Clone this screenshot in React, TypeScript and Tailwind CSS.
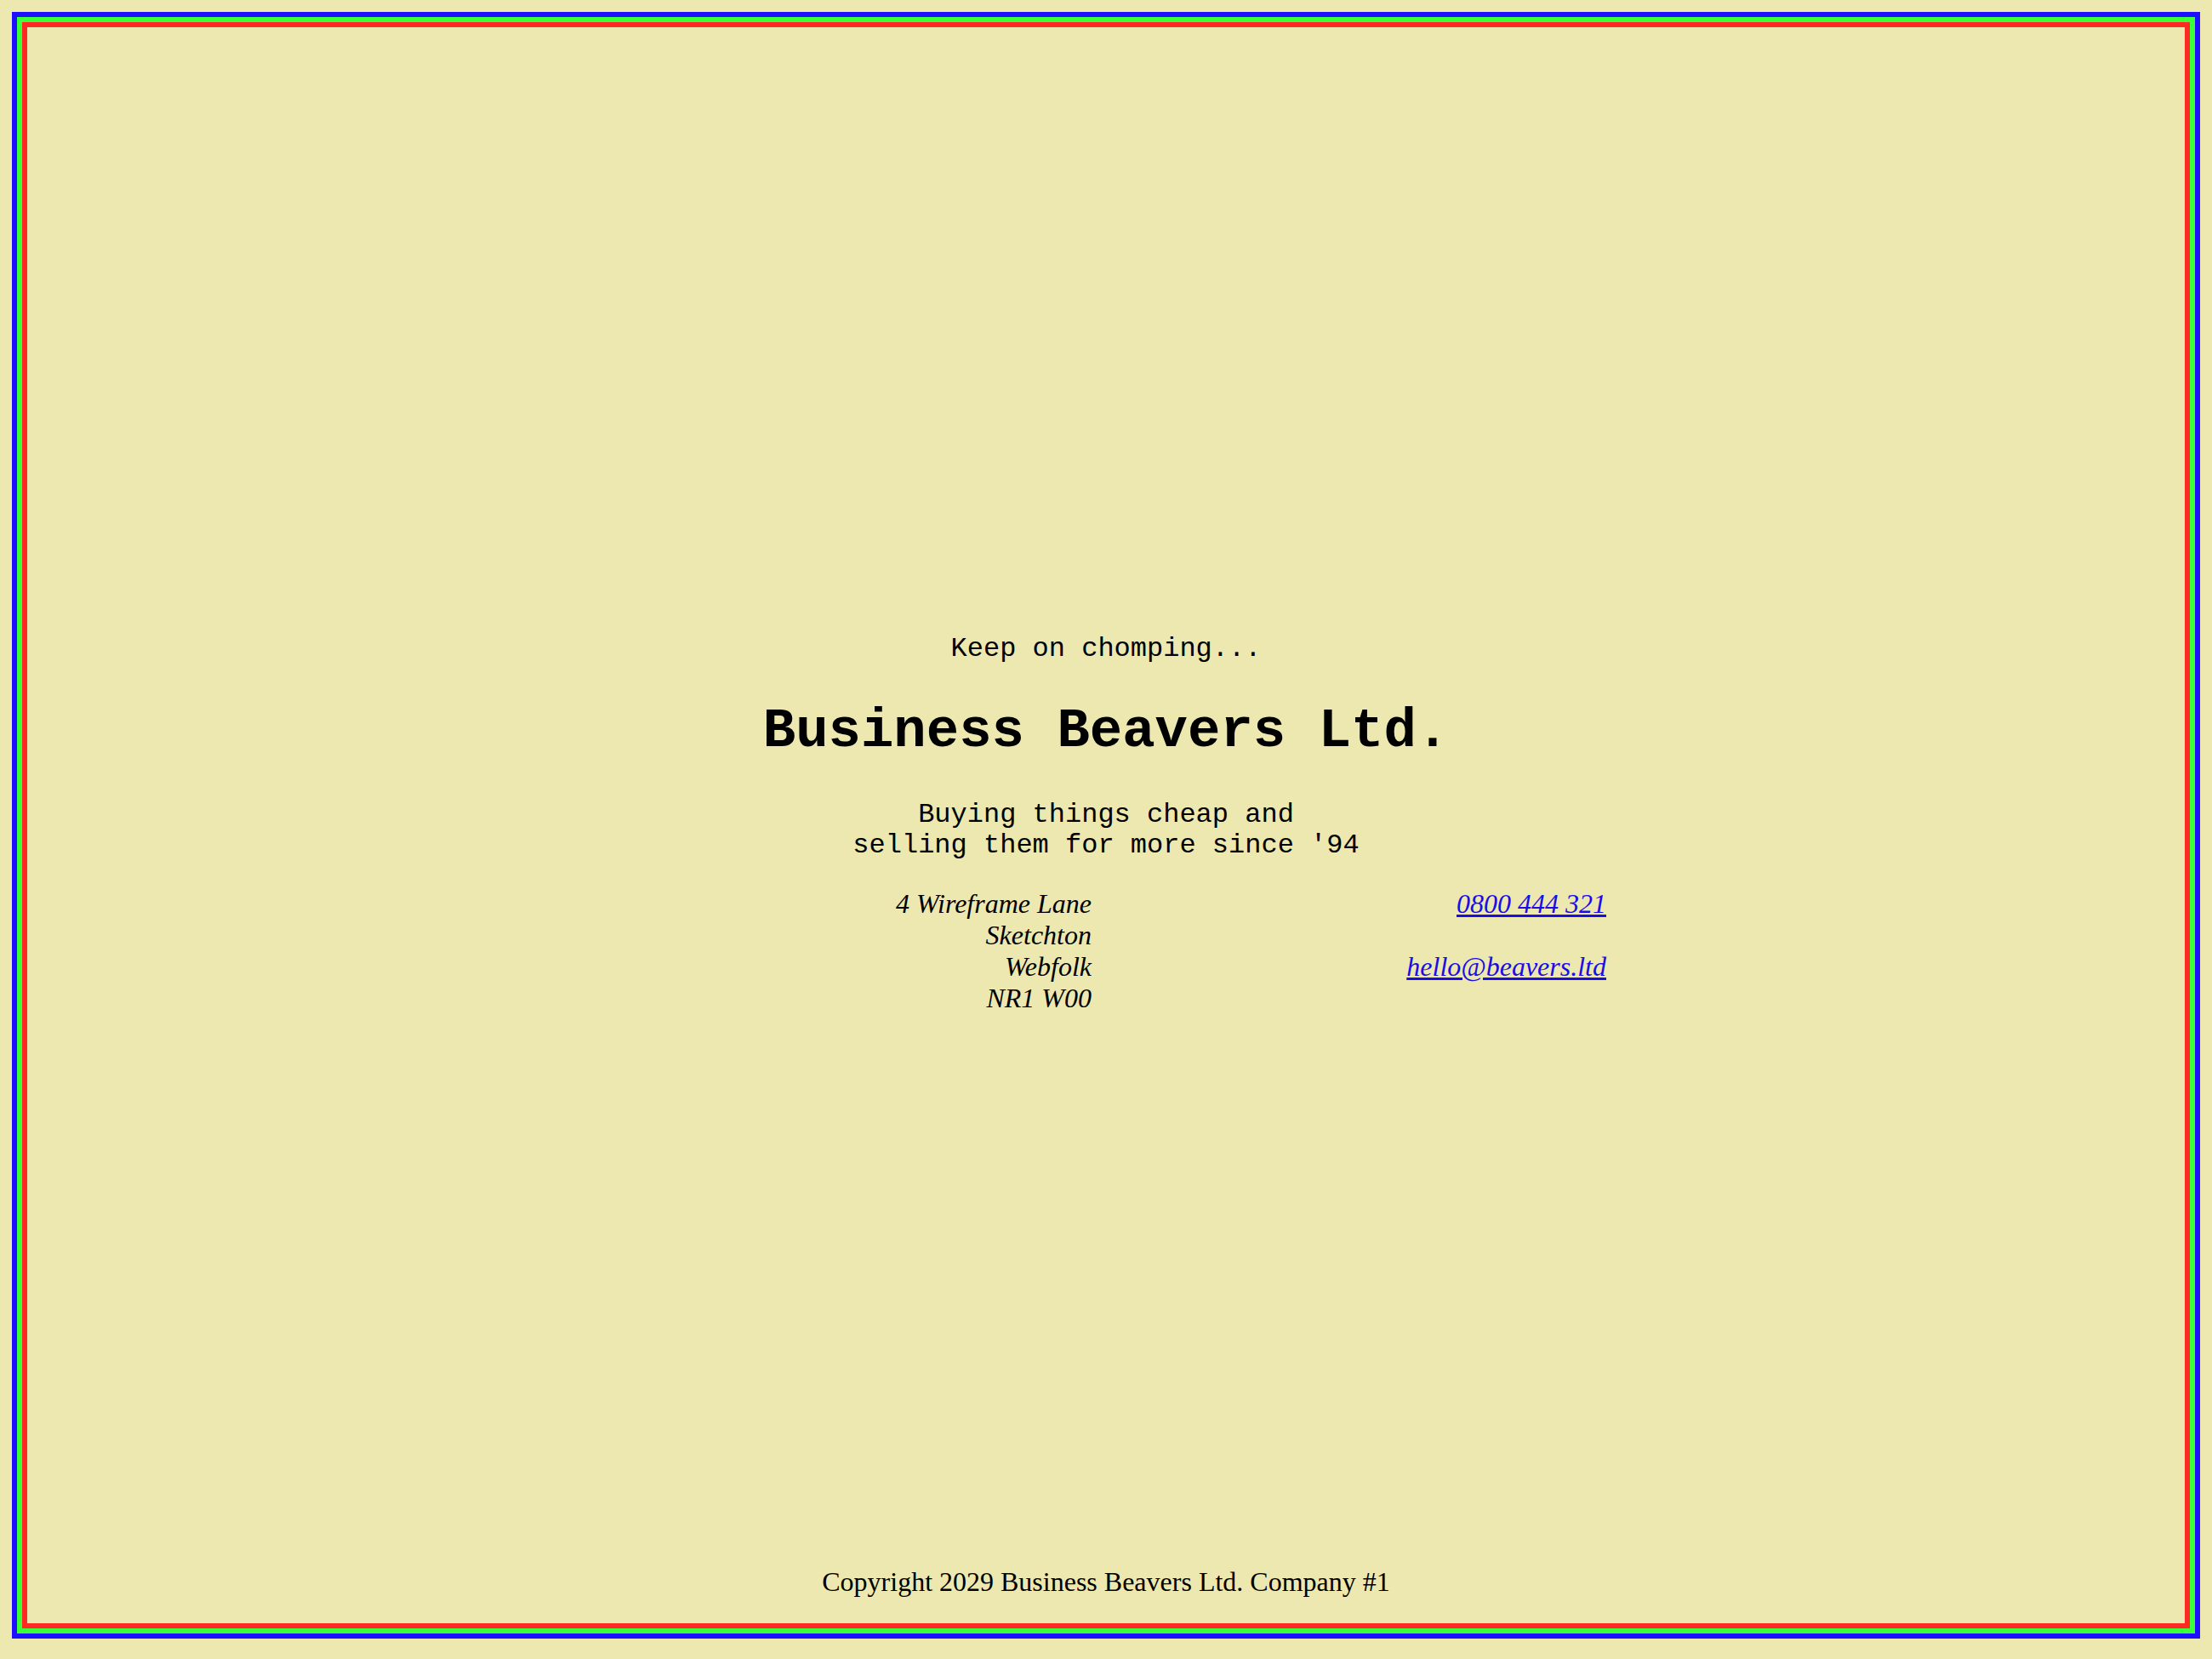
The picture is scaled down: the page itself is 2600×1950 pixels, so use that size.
export default function App() {
  return (
    <div className="h-[1950px] w-full bg-[#ede8b0] px-[14px] pt-[14px] pb-[24px] text-black">
      <div className="h-full border-[6px] border-[#1c10ff]">
        <div className="h-full border-[6px] border-[#3cff3c]">
          <div className="flex h-full flex-col border-[6px] border-[#ff2a24]">
            {/* main */}
            <main className="flex flex-1 flex-col items-center justify-center pt-[64px] font-['Liberation_Mono',monospace]">
              <p className="text-[32px] leading-[36px]">Keep on chomping...</p>
              <h1 className="mt-[43px] text-[64px] font-bold leading-[72px]">Business Beavers Ltd.</h1>
              <p className="mt-[44px] text-center text-[32px] leading-[36px]">
                Buying things cheap and
                <br />
                selling them for more since '94
              </p>
              <div className="mt-[32px] grid w-[1176px] grid-cols-2 gap-x-[34px] font-['Liberation_Serif',serif] text-[32px] italic leading-[37px]">
                <address className="text-right">
                  4 Wireframe Lane
                  <br />
                  Sketchton
                  <br />
                  Webfolk
                  <br />
                  NR1 W00
                </address>
                <div className="flex flex-col items-end gap-[37px]">
                  <a href="#" className="text-[#1a0de6] underline">0800 444 321</a>
                  <a href="#" className="text-[#1a0de6] underline">hello@beavers.ltd</a>
                </div>
              </div>
            </main>
            <footer className="pb-[30px] text-center font-['Liberation_Serif',serif] text-[32px] leading-[37px]">
              Copyright 2029 Business Beavers Ltd. Company #1
            </footer>
          </div>
        </div>
      </div>
    </div>
  );
}
